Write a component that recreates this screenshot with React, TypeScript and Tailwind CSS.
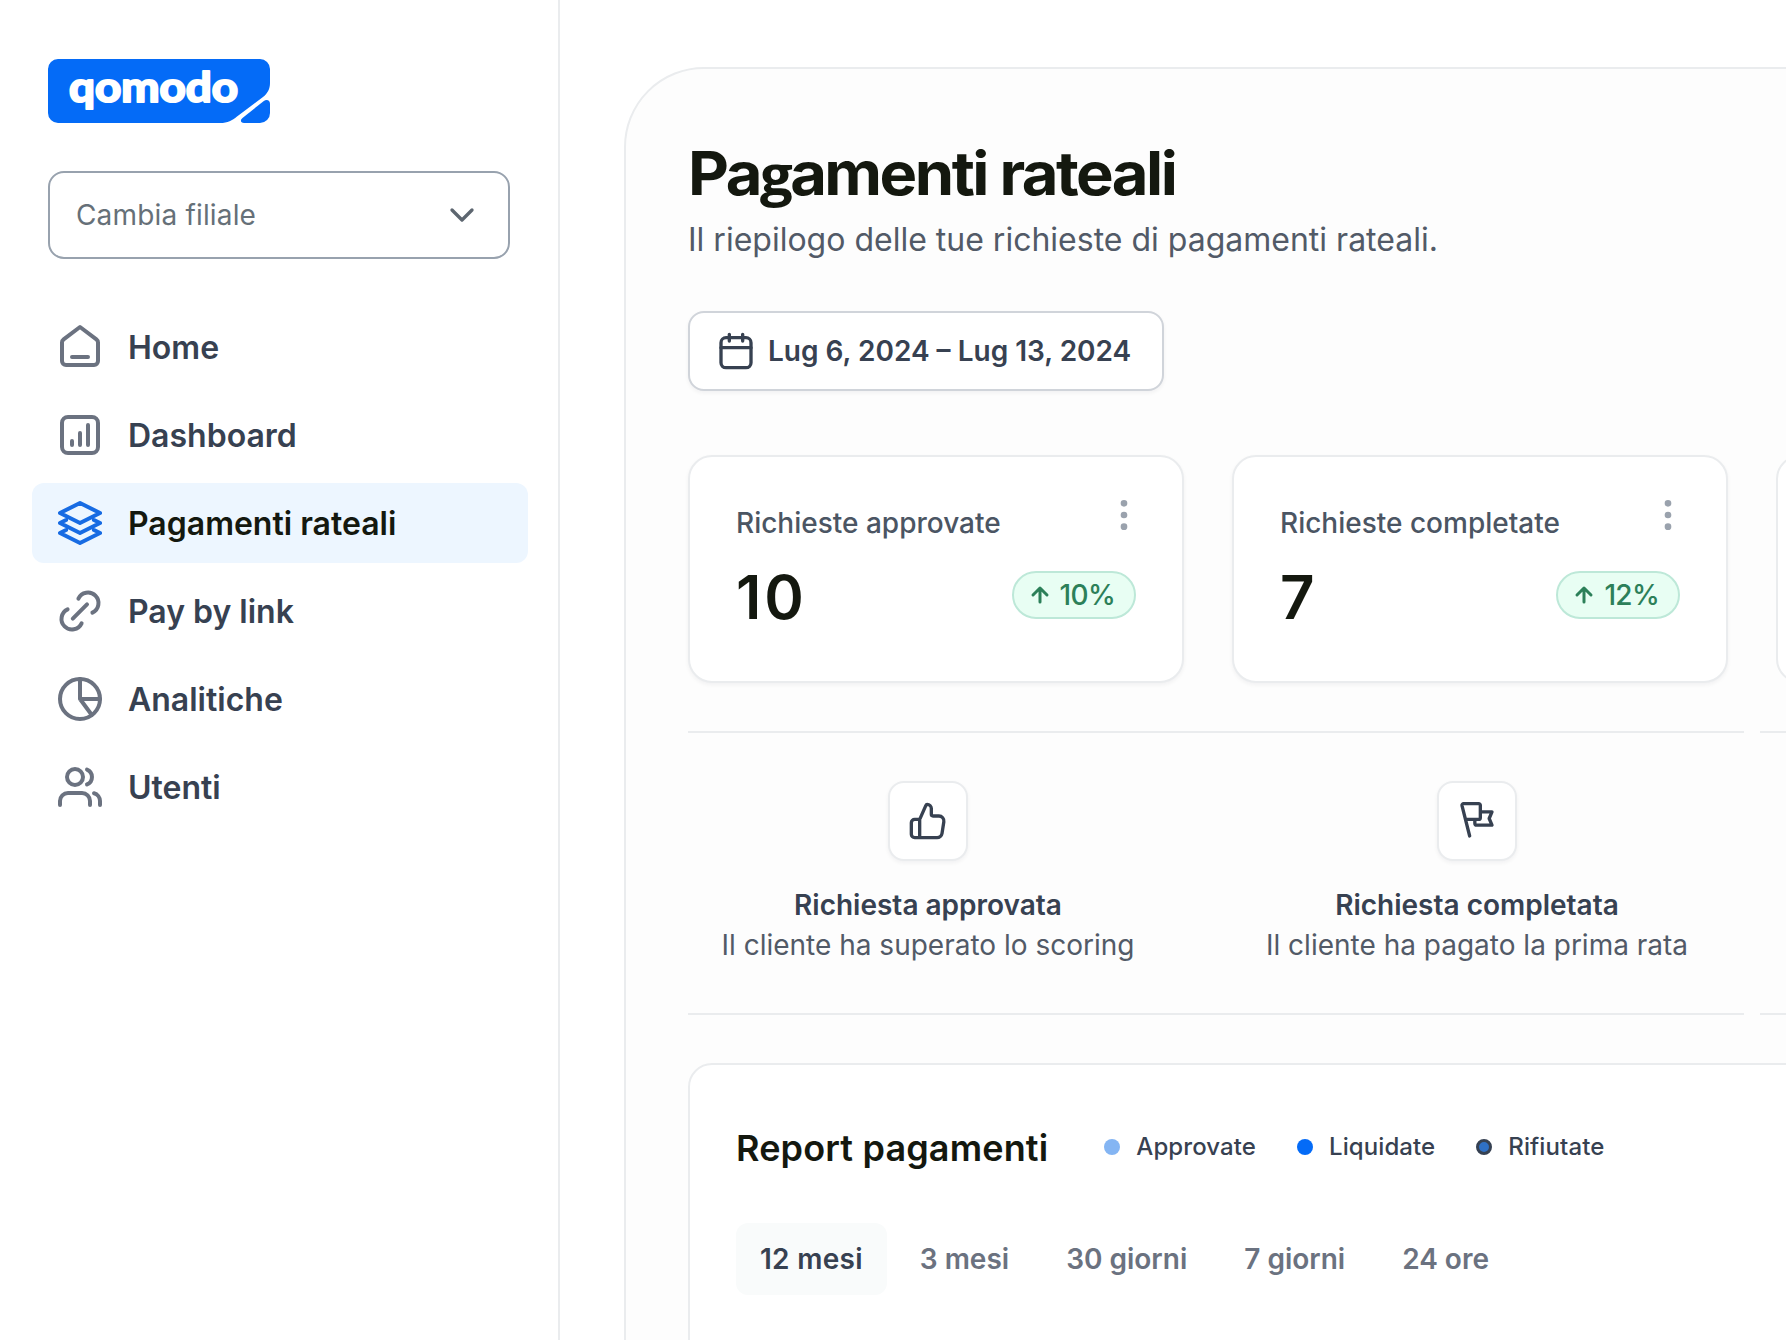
import React from 'react';
import { clsx } from 'clsx';

interface IconProps {
  size: number;
  strokeWidth?: number;
  className?: string;
  children: React.ReactNode;
}

const Icon: React.FC<IconProps> = ({ size, strokeWidth = 2, className, children }) => (
  <svg
    width={size}
    height={size}
    viewBox="0 0 24 24"
    fill="none"
    stroke="currentColor"
    strokeWidth={strokeWidth}
    strokeLinecap="round"
    strokeLinejoin="round"
    className={clsx('shrink-0', className)}
  >
    {children}
  </svg>
);

const navItems = [
  {
    label: 'Home',
    icon: (
      <path d="M8 17h8M12 2 3.8 8.2A2 2 0 0 0 3 9.8V19a2 2 0 0 0 2 2h14a2 2 0 0 0 2-2V9.8a2 2 0 0 0-.8-1.6L12 2Z" />
    )
  },
  {
    label: 'Dashboard',
    icon: (
      <>
        <rect x="3" y="3" width="18" height="18" rx="3" />
        <path d="M8 15v2M12 11v6M16 7v10" />
      </>
    )
  },
  {
    label: 'Pagamenti rateali',
    active: true,
    icon: (
      <path d="M12 2 2 7l10 5 10-5-10-5ZM5 10.500 2 12l10 5 10-5-3-1.500M5 15.500 2 17l10 5 10-5-3-1.500" />
    )
  },
  {
    label: 'Pay by link',
    icon: (
      <path d="m8.400 15.800 7.100-7.100M11.200 5.800A5.270 5.270 0 1 1 18.200 12.800M12.800 18.200A5.270 5.270 0 1 1 5.800 11.200" />
    )
  },
  {
    label: 'Analitiche',
    icon: (
      <>
        <circle cx="12" cy="12" r="10" />
        <path d="M12 2v10h10M12 12l5.9 8" />
      </>
    )
  },
  {
    label: 'Utenti',
    icon: (
      <>
        <circle cx="9.5" cy="7" r="4" />
        <path d="M2 21v-2a4 4 0 0 1 4-4h7a4 4 0 0 1 4 4v2M22 21v-2a4 4 0 0 0-3-3.87M15.5 3.3a4 4 0 0 1 0 7.4" />
      </>
    )
  }
];

const stats = [
  { label: 'Richieste approvate', value: '10', change: '10%' },
  { label: 'Richieste completate', value: '7', change: '12%' }
];

const legend = [
  { label: 'Approvate', dot: 'bg-[#84b5f3]' },
  { label: 'Liquidate', dot: 'bg-[#046bf7]' },
  { label: 'Rifiutate', dot: 'bg-[#2f70c4] border-[3px] border-[#364152]' }
];

const ranges = ['12 mesi', '3 mesi', '30 giorni', '7 giorni', '24 ore'];

const Logo = () => (
  <svg width="222" height="64" viewBox="0 0 222 64" fill="none" className="overflow-visible">
    <path
      d="M10 0H212a10 10 0 0 1 10 10V24c0 6-2.500 10.500-7 14L189 57.500C184 61.500 180 64 172 64H10A10 10 0 0 1 0 54V10A10 10 0 0 1 10 0Z"
      fill="#046bf7"
    />
    <path
      d="M215.500 42.300C218.500 40 222 41 222 45v9a10 10 0 0 1-10 10h-16c-3.500 0-4-3-1.500-5L215.500 42.300Z"
      fill="#046bf7"
    />
    <text
      x="21"
      y="43"
      textLength="169"
      lengthAdjust="spacingAndGlyphs"
      className="font-['Lato',sans-serif] text-[42px] font-bold"
      fill="white"
      stroke="white"
      strokeWidth="2.2"
      strokeLinejoin="round"
    >
      qomodo
    </text>
  </svg>
);

const Sidebar = () => (
  <aside className="flex w-[560px] shrink-0 flex-col border-r-2 border-[#eaecee] pt-[59px]">
    <div className="px-12">
      <Logo />
      <button className="mt-12 flex h-[88px] w-[462px] items-center justify-between rounded-2xl border-2 border-[#98a2ae] bg-white px-[26px] text-[28px] tracking-[0.006em] text-[#667078]">
        Cambia filiale
        <Icon size={40} className="text-[#5d6670]">
          <path d="m6 9 6 6 6-6" />
        </Icon>
      </button>
    </div>
    <nav className="mt-12 flex flex-col gap-2 px-8">
      {navItems.map((item) => (
        <a
          key={item.label}
          className={clsx(
            'flex h-20 w-[496px] items-center gap-6 rounded-xl px-6 text-[32px] font-semibold',
            item.active ? 'bg-[#edf6ff] text-[#14180f]' : 'text-[#374151]'
          )}
        >
          <Icon size={48} className={item.active ? 'text-[#176be3]' : 'text-[#6b7280]'}>
            {item.icon}
          </Icon>
          <span className="pt-0.5">{item.label}</span>
        </a>
      ))}
    </nav>
  </aside>
);

interface StatCardProps {
  label: string;
  value: string;
  change: string;
}

const StatCard: React.FC<StatCardProps> = ({ label, value, change }) => (
  <div className="flex h-[228px] w-[496px] shrink-0 flex-col rounded-3xl border-2 border-[#eaecee] bg-white px-[46px] pt-[38px] shadow-[0_2px_4px_rgba(16,24,40,0.05)]">
    <div className="flex items-start justify-between">
      <span className="pt-2 text-[28px] leading-10 font-medium text-[#4b5563]">{label}</span>
      <Icon size={40} className="-mr-2 text-[#9aa2ad]">
        <circle cx="12" cy="5" r="1" />
        <circle cx="12" cy="12" r="1" />
        <circle cx="12" cy="19" r="1" />
      </Icon>
    </div>
    <div className="mt-4 flex items-start justify-between">
      <span className="text-[60px] leading-[76px] font-semibold tracking-[0.05em] text-[#14180f]">{value}</span>
      <span className="mt-3 flex h-12 items-center gap-2 rounded-full border-2 border-[#bde8d8] bg-[#e8fef3] pr-[19px] pl-[14px] text-[28px] font-medium tracking-[-0.025em] text-[#2c8059]">
        <Icon size={24} strokeWidth={3}>
          <path d="M12 19V5M5 12l7-7 7 7" />
        </Icon>
        {change}
      </span>
    </div>
  </div>
);

interface StepProps {
  title: string;
  text: string;
  className: string;
  children: React.ReactNode;
}

const Step: React.FC<StepProps> = ({ title, text, className, children }) => (
  <div className={clsx('flex shrink-0 flex-col items-center text-[28px] leading-10', className)}>
    <div className="mb-6 flex h-20 w-20 items-center justify-center rounded-2xl border-2 border-[#eaecee] bg-white text-[#374151] shadow-[0_2px_4px_rgba(16,24,40,0.05)]">
      <Icon size={40}>{children}</Icon>
    </div>
    <span className="font-semibold text-[#374151]">{title}</span>
    <span className="text-[#525a67]">{text}</span>
  </div>
);

const App = () => (
  <div className="flex h-[1340px] w-[1786px] overflow-hidden bg-white font-['Inter',sans-serif]">
    <Sidebar />
    <main className="min-w-0 flex-1 pt-[67px] pl-16">
      <div className="h-[1400px] w-[1400px] rounded-tl-[80px] border-2 border-[#eaecee] bg-[#fdfdfd] pt-[66px] pl-[62px]">
        <h1 className="h-[76px] origin-left scale-x-[1.055] text-[60px] leading-[76px] font-bold tracking-[-0.04em] text-[#14180f]">
          Pa<span className="font-['Open_Sans',sans-serif] text-[55px] font-bold">g</span>amenti rateali
        </h1>
        <p className="mt-[5px] text-[32px] leading-[48px] text-[#525a67]">
          Il riepilogo delle tue richieste di pagamenti rateali.
        </p>

        <button className="mt-[47px] flex h-20 w-[476px] items-center gap-3 rounded-2xl border-2 border-[#d0d4da] bg-white px-[26px] text-[28px] font-semibold whitespace-nowrap text-[#374151] shadow-[0_2px_4px_rgba(16,24,40,0.05)]">
          <Icon size={40}>
            <rect x="3" y="4" width="18" height="18" rx="3" />
            <path d="M3 10h18M8 2v4M16 2v4" />
          </Icon>
          Lug 6, 2024 – Lug 13, 2024
        </button>

        <div className="mt-16 flex gap-12">
          {stats.map((stat) => (
            <StatCard key={stat.label} {...stat} />
          ))}
          <div className="h-[228px] w-[496px] shrink-0 rounded-3xl border-2 border-[#eaecee] bg-white" />
        </div>

        <div className="mt-12 flex gap-4">
          <div className="flex h-[284px] w-[1056px] shrink-0 gap-16 border-y-2 border-[#eaecee] pt-12">
            <Step className="w-[480px]" title="Richiesta approvata" text="Il cliente ha superato lo scoring">
              <path d="M7 22V11M2 13v7a2 2 0 0 0 2 2h13.400a3 3 0 0 0 3-2.500l1.100-7a3 3 0 0 0-3-3.500H15a1 1 0 0 1-1-1V4.500A2.500 2.500 0 0 0 11.500 2a.8.8 0 0 0-.7.500L7.300 10.400A1 1 0 0 1 6.400 11H4a2 2 0 0 0-2 2" />
            </Step>
            <Step className="w-[490px]" title="Richiesta completata" text="Il cliente ha pagato la prima rata">
              <path d="M14 6.500H21l-1.700 4 1.700 4H11.900a1.200 1.200 0 0 1-1.200-1.200V11M7.600 21 3 2.800A1 1 0 0 1 4 1.600h9a1 1 0 0 1 1 1V10a1 1 0 0 1-1 1H5.100" />
            </Step>
          </div>
          <div className="h-[284px] flex-1 border-y-2 border-[#eaecee]" />
        </div>

        <section className="mt-12 h-[600px] rounded-tl-3xl border-2 border-[#eaecee] bg-white pt-[57px] pl-[46px]">
          <div className="flex items-center gap-14">
            <h2 className="text-[36px] leading-[52px] font-semibold tracking-[0.004em] text-[#14180f]">
              Report pagamenti
            </h2>
            <div className="flex gap-[41px] pb-[3px]">
              {legend.map((item) => (
                <div
                  key={item.label}
                  className="flex items-center gap-4 text-2xl font-medium tracking-[0.004em] text-[#374151]"
                >
                  <span className={clsx('h-4 w-4 rounded-full', item.dot)} />
                  {item.label}
                </div>
              ))}
            </div>
          </div>
          <div className="mt-[49px] flex gap-[9px]">
            {ranges.map((range, i) => (
              <button
                key={range}
                className={clsx(
                  'h-[72px] rounded-xl px-6 text-[28px] font-semibold',
                  i === 0 ? 'bg-[#f9fbfb] tracking-[0.01em] text-[#374151]' : 'text-[#6b7280]'
                )}
              >
                {range}
              </button>
            ))}
          </div>
        </section>
      </div>
    </main>
  </div>
);

export default App;
